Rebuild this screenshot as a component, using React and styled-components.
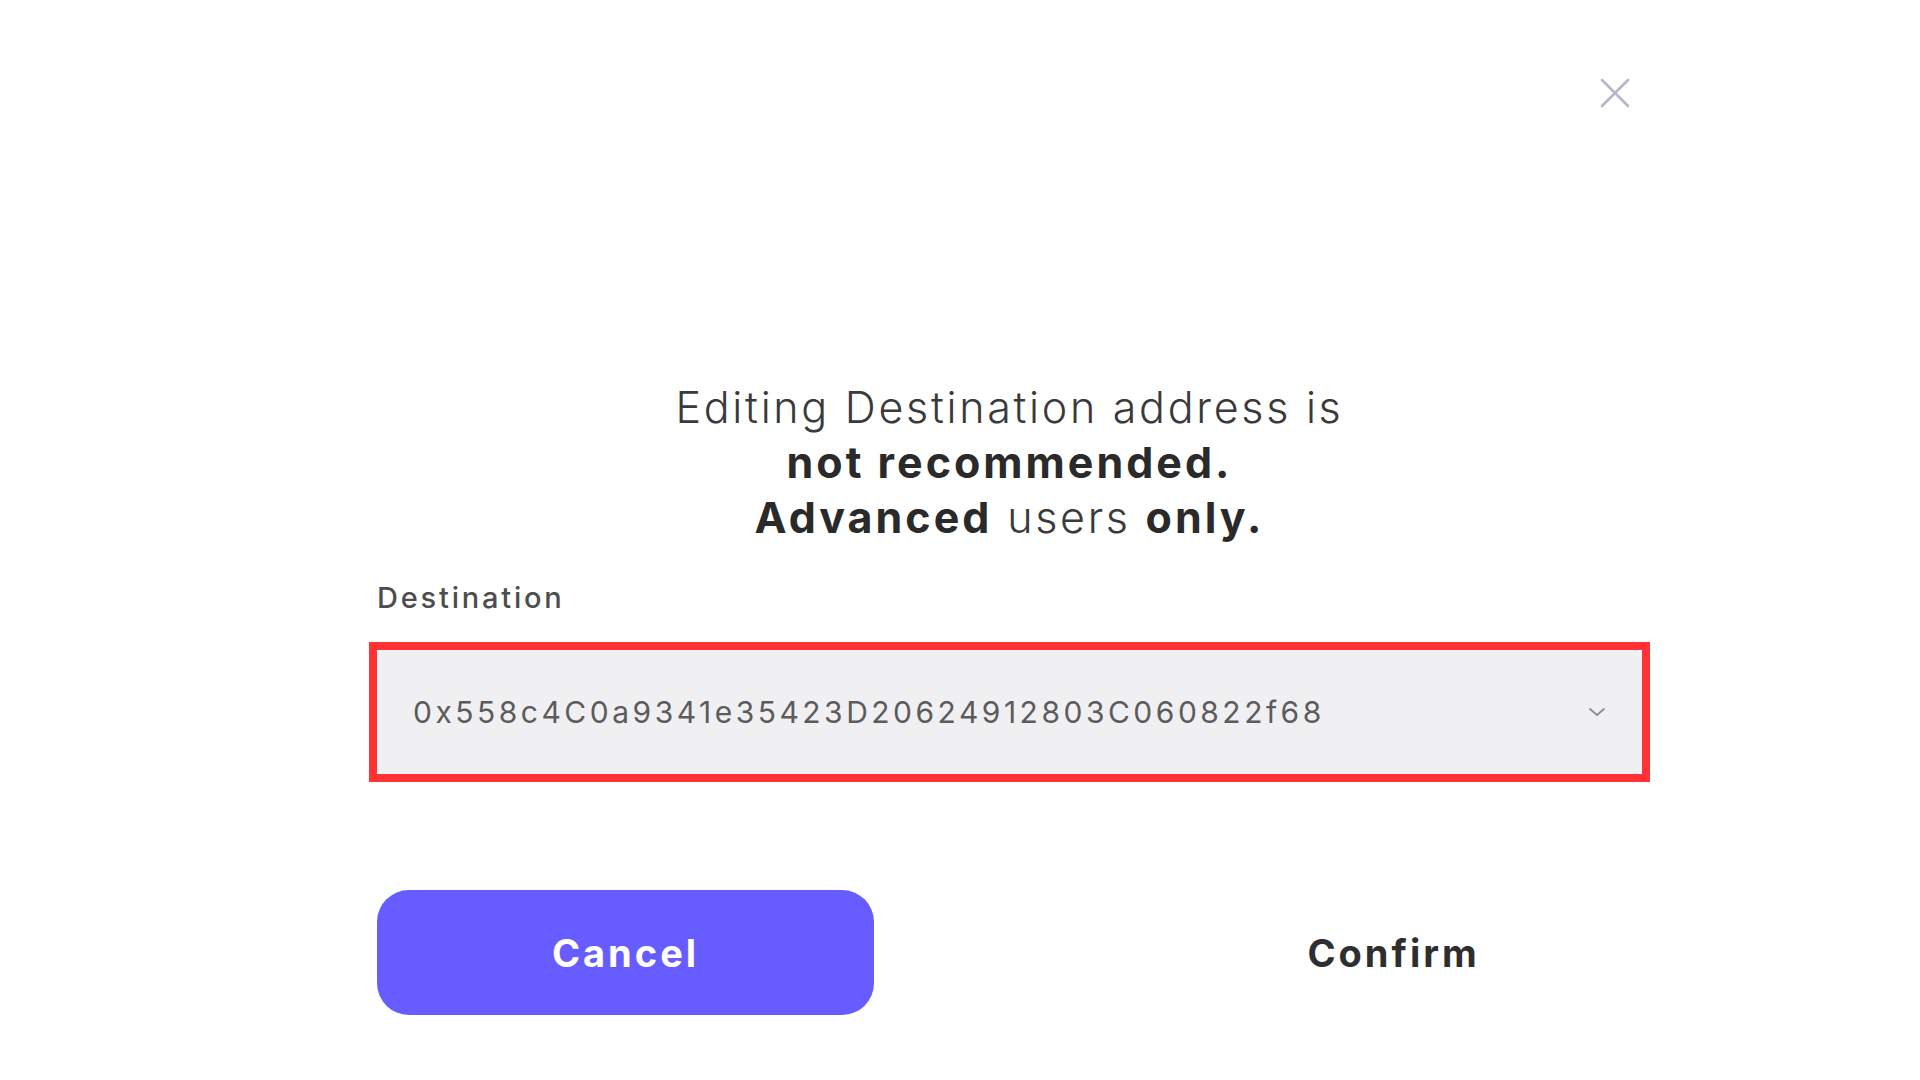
import styled, { createGlobalStyle } from "styled-components"

const GlobalStyle = createGlobalStyle`
* { box-sizing: border-box; }
html, body { margin: 0; padding: 0; background: #ffffff; }
body { font-family: Inter, "Noto Sans", "Liberation Sans", sans-serif; color: #333; }
`

const Page = styled.div`
width: 1920px;
height: 1080px;
background: #fff;
display: flex;
justify-content: flex-start;
padding-left: 377px;
`

const Modal = styled.div`
width: 1265px;
display: flex;
flex-direction: column;
`

const TopBar = styled.div`
display: flex;
justify-content: flex-end;
padding: 78px 12px 0 0;
height: 108px;
`

const Close = styled.button`
width: 30px;
height: 30px;
padding: 0;
border: none;
background: transparent;
cursor: pointer;
display: flex;
`

const Heading = styled.h2`
margin: 272px 0 0;
text-align: center;
font-size: 43px;
line-height: 55px;
font-weight: 300;
color: #3a3a3a;
letter-spacing: 2.7px;
`

const Strong = styled.b`
font-weight: 700;
color: #2a2a2a;
letter-spacing: 3px;
`

const Label = styled.label`
margin-top: 35px;
font-size: 29px;
line-height: 36px;
font-weight: 500;
color: #4d4d4d;
letter-spacing: 2.8px;
`

const Highlight = styled.div`
margin: 26px -8px 0;
border: 8px solid #ff3333;
`

const Field = styled.div`
height: 124px;
background: #f0f0f3;
border-radius: 6px;
display: flex;
align-items: center;
justify-content: space-between;
padding: 0 36px;
`

const Address = styled.span`
font-size: 30px;
font-weight: 400;
color: #5c5c5c;
letter-spacing: 3.5px;
`

const Actions = styled.div`
margin-top: 108px;
display: flex;
justify-content: space-between;
`

const Button = styled.button`
width: 497px;
height: 125px;
border: none;
border-radius: 32px;
font-family: inherit;
font-size: 38px;
font-weight: 700;
letter-spacing: 3px;
cursor: pointer;
background: ${p => (p.primary ? "#665cff" : "transparent")};
color: ${p => (p.primary ? "#ffffff" : "#2e2e2e")};
`

const App = () => {
  return (
    <Page>
      <GlobalStyle />
      <Modal>
        <TopBar>
          <Close aria-label="close">
            <svg width="30" height="30" viewBox="0 0 30 30">
              <path d="M2 2 L28 28 M28 2 L2 28" stroke="#b7b7c9" strokeWidth="2.6" strokeLinecap="round" />
            </svg>
          </Close>
        </TopBar>
        <Heading>
          Editing Destination address is
          <br />
          <Strong>not recommended.</Strong>
          <br />
          <Strong>Advanced</Strong> users <Strong>only.</Strong>
        </Heading>
        <Label>Destination</Label>
        <Highlight>
          <Field>
            <Address>0x558c4C0a9341e35423D20624912803C060822f68</Address>
            <svg width="18" height="10" viewBox="0 0 18 10">
              <path d="M2 2 L9 8 L16 2" fill="none" stroke="#8a8a99" strokeWidth="1.8" strokeLinecap="round" strokeLinejoin="round" />
            </svg>
          </Field>
        </Highlight>
        <Actions>
          <Button primary>Cancel</Button>
          <Button>Confirm</Button>
        </Actions>
      </Modal>
    </Page>
  )
}

export default App
